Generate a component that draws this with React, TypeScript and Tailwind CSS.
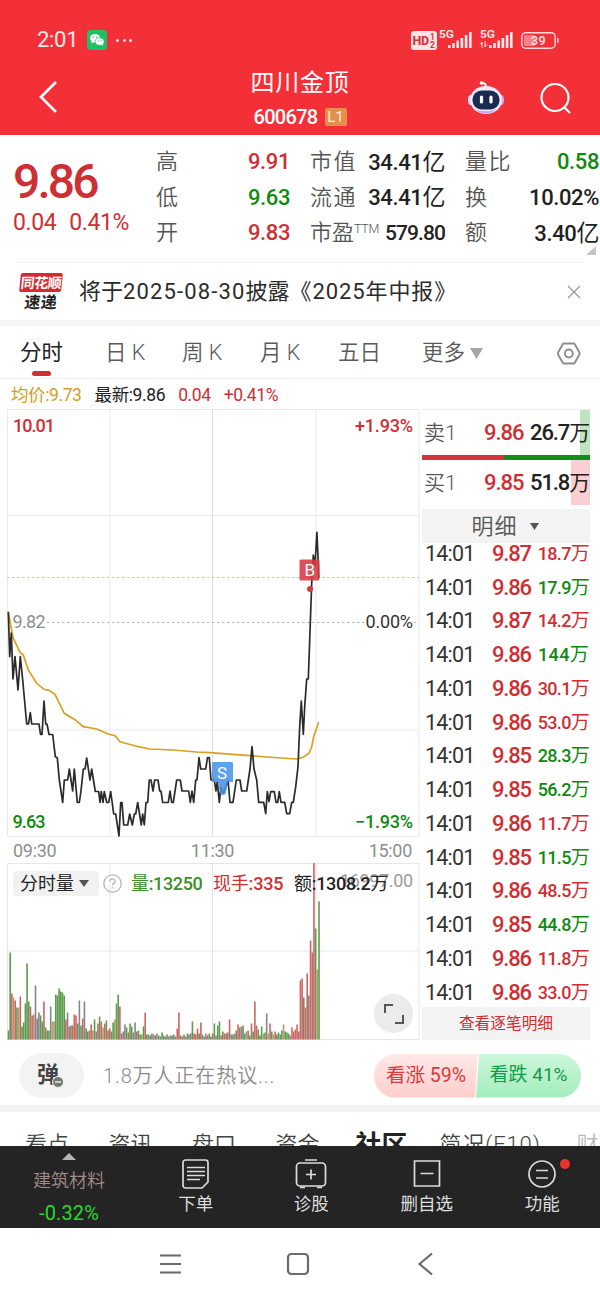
import type { ReactNode } from 'react';
import clsx from 'clsx';

const RED = 'text-[#cf2e33]';
const GREEN = 'text-[#0f8a0f]';

const PRICE_LINE =
  '8.3,611.7 9.7,656.7 11.3,633 13,679 15,656.7 18,690 20.3,656.7 22.7,680 26.7,724 28.5,724 30.3,712.7 31.7,724 39,724 40.5,734.5 42,734.5 44,701 45.7,724 47,724 49,734.5 52.7,734.5 55.3,756.7 57.3,757.7 59.3,780 62.7,802.5 64.3,780 67.7,780 69.3,769 72.7,791 74.3,769 77.3,802.5 79.3,802.5 81,791 83.3,769 85,769 86.7,758 90,780 91.7,769 95.3,791.5 98.7,791.5 100,802.5 101.3,791.5 103,802.5 104.3,791.5 106.7,802.5 108.7,802.5 110.7,791.5 113.7,814 115.7,814 119,836 120.7,802.5 122,802.5 123.7,825 127.7,825 129.7,814 132.3,825 134.3,814 135.7,814 137.7,802.5 141.3,825 142.7,814 144.3,825 146,802.5 147.7,802.5 149.3,780 151,780 153,791 154.7,780 158,780 159.7,791 161,791 162.7,802.5 168.3,802.5 170,791 171.7,802.5 173.3,802.5 176.7,780 180.3,780 182,791 188.7,791 190.3,802.5 192,791 193.7,802.5 195.7,780 197,780 199,757.7 200.7,769 205.7,769 207.5,757.7 209.3,757.7 211,780 214.3,780 216,791 217.3,781.7 219.3,802.3 221,787 222.7,793 225,789 228,780 230,802.3 233,802.3 236.3,780 240,780 241.7,791 246.7,791 250,769 252,746.7 254,769 256.7,780 258.7,802.3 263.7,802.3 265.7,813.7 267.3,791.7 269,801.7 270.7,791.7 274.3,791.7 276,802.3 277.7,802.3 279.3,791.7 281,802.3 284.7,802.3 286.7,813.7 289.7,813.7 291.7,802.3 293.3,802.3 295.7,786.7 298,766.7 299.7,726.7 301.3,701 303.3,734.3 304.7,706.7 306.7,679 308.3,679 309.7,640 311.7,583.3 313.3,555 315,566 316.9,532.3 318.3,563 318.6,578';

const AVG_LINE =
  '8.3,612 13,637.7 20,652.3 23.3,655 28.3,670 36.7,683.3 44,689.3 49,690.3 55,694.3 64.3,713.3 75,719.7 83.3,726.7 96.7,729 108.3,734 115,735.7 120,741.7 138.3,746.7 150,749 173.3,750 196.7,752 210,752.6 233,754.3 266.7,757 296.7,759 303.3,757.3 309,753.3 311.7,746.7 313.7,736.7 318.7,722.3';

// one bar per minute: height + direction (r up, g down, k flat, t mixed)
const VOLUMES =
  '9g 87g 46r 42t 39r 32g 32t 43r 13g 17g 36g 76g 38g 33r 24r 25t 54k 21k 27k 24g 18g 38r 12g 9g 9g 33k 18t 18t 45g 44g 51g 48g 47g 44g 20r 27k 13r 14g 14r 25r 24r 16g 39k 14g 21r 38k 11g 8g 9r 15r 9t 20g 8k 16r 23g 18r 12t 16r 19g 9r 11r 8g 17g 20t 36g 45g 33r 6r 8k 15k 12g 7r 16g 13g 7k 17k 8r 9g 5g 5t 13g 27r 5g 5k 4g 6k 5r 4g 6k 4k 3g 7g 4k 3g 5k 3r 4g 4k 5g 3k 11r 27r 4g 3k 5r 3g 6k 5g 6k 18g 6r 5r 11r 6g 17r 5k 3g 6k 4r 6g 3k 6r 16g 4k 14g 18g 4r 8g 6r 6r 7g 20r 5k 5g 6k 9g 15r 12r 13k 14g 6g 8t 9k 4g 16r 8g 38r 14r 10g 4g 13g 6t 7g 26k 6t 16r 8g 5t 8r 5g 7g 5k 9g 15t 8g 7g 6g 4k 12r 8r 10r 15r 8r 59r 61r 42g 32r 66r 44k 99r 87r 177r 111g 70t 138g'
    .split(' ')
    .map((v) => ({ h: parseInt(v, 10), dir: v.slice(-1) }));

const BAR_COLORS: Record<string, string> = {
  r: '#cf6464',
  g: '#5b9c4d',
  k: '#85858b',
  t: '#b79a6c',
};

const TRADES = [
  ['9.87', '18.7', 'r'],
  ['9.86', '17.9', 'g'],
  ['9.87', '14.2', 'r'],
  ['9.86', '144', 'g'],
  ['9.86', '30.1', 'r'],
  ['9.86', '53.0', 'r'],
  ['9.85', '28.3', 'g'],
  ['9.85', '56.2', 'g'],
  ['9.86', '11.7', 'r'],
  ['9.85', '11.5', 'g'],
  ['9.86', '48.5', 'r'],
  ['9.85', '44.8', 'g'],
  ['9.86', '11.8', 'r'],
  ['9.86', '33.0', 'r'],
];

const Signal = ({ data }: { data?: boolean }) => (
  <svg className="overflow-visible" width="34" height="20" viewBox="0 0 34 20" fill="#ffe9ea">
    <text x="0" y="8" fontSize="11.5" fontWeight="600" textLength="15" lengthAdjust="spacingAndGlyphs">
      5G
    </text>
    {[3, 5, 7.5, 10, 13, 16].map((h, i) => (
      <rect key={h} x={9 + i * 4.2} y={18 - h} width="2.6" height={h} rx="0.6" />
    ))}
    {data && <path d="M0 14.5l2-2.5v6M7 14.5l-2 2.5v-6" stroke="#ffe9ea" strokeWidth="1" fill="none" />}
  </svg>
);

const StatusBar = () => (
  <div className="flex h-[60px] items-center pt-5 pl-[37px]">
    <span className="w-[50px] text-[22px] leading-none tracking-[-0.3px] text-[#ffe9ea]">2:01</span>
    <svg width="20" height="20" viewBox="0 0 20 20">
      <rect width="20" height="20" rx="4" fill="#1fc066" />
      <ellipse cx="8" cy="8.3" rx="5" ry="4.2" fill="#fff" />
      <path d="M5 11l-.8 2.4 3-1.4z" fill="#fff" />
      <ellipse cx="12.7" cy="11.6" rx="4.4" ry="3.7" fill="#fff" stroke="#1fc066" strokeWidth="0.6" />
      <path d="M14 14.6l2 1.2-.2-2.2z" fill="#fff" />
      <g fill="#1fc066">
        <circle cx="6.3" cy="7.2" r="0.7" />
        <circle cx="9.6" cy="7.2" r="0.7" />
        <circle cx="11.3" cy="10.8" r="0.6" />
        <circle cx="14.1" cy="10.8" r="0.6" />
      </g>
    </svg>
    <div className="ml-[9px] flex gap-[3.5px]">
      <i className="size-[3px] rounded-full bg-[#ffe0e1]" />
      <i className="size-[3px] rounded-full bg-[#ffe0e1]" />
      <i className="size-[3px] rounded-full bg-[#ffe0e1]" />
    </div>
    <svg className="ml-[279px]" width="26" height="19" viewBox="0 0 26 19" fill="#d8303a">
      <rect width="26" height="19" rx="3" fill="#ffe4e6" />
      <text x="1.5" y="14" fontSize="12.5" fontWeight="800" textLength="16.5">
        HD
      </text>
      <text x="19" y="9" fontSize="8.5" fontWeight="700">
        1
      </text>
      <text x="19" y="17" fontSize="8.5" fontWeight="700">
        2
      </text>
    </svg>
    <div className="ml-[2px] flex gap-[7px]">
      <Signal />
      <Signal data />
    </div>
    <svg className="ml-[7px]" width="40" height="17" viewBox="0 0 40 17">
      <rect x="3" y="3" width="11" height="11" rx="1" fill="#f98286" />
      <rect x="0.8" y="0.8" width="33.4" height="15.4" rx="4" fill="none" stroke="#ffd9da" strokeWidth="1.5" />
      <path d="M36 6.2h1.6v4.6H36z" fill="#ffd9da" />
      <text x="10" y="13" fontSize="12.5" fontWeight="500" fill="#ffe9ea" textLength="14.5">
        39
      </text>
    </svg>
  </div>
);

const Robot = () => (
  <svg width="38" height="36" viewBox="0 0 38 36" fill="none">
    <path d="M19 7c0-3-1-4-4-4" stroke="#fff" strokeWidth="2" />
    <circle cx="14.5" cy="3" r="1.8" fill="#fff" />
    <ellipse cx="3.8" cy="20" rx="2.8" ry="5" fill="#e7dcf6" />
    <ellipse cx="34.2" cy="20" rx="2.8" ry="5" fill="#cfa9ee" />
    <ellipse cx="19" cy="20" rx="16" ry="14" fill="#eee9fb" />
    <path d="M8 29c6 6 16 6 22 0-5 3-17 3-22 0z" fill="#c9a6ec" />
    <rect x="5.5" y="10.5" width="27" height="19" rx="9" fill="#1b2b50" />
    <path d="M14.5 17v5M24 17v5" stroke="#fff" strokeWidth="3.2" strokeLinecap="round" />
  </svg>
);

const Header = () => (
  <header className="h-[135px] bg-[#f33038] text-white">
    <StatusBar />
    <div className="flex h-[75px] items-center">
      <svg className="mt-[-1px] ml-[38px]" width="20" height="34" viewBox="0 0 20 34">
        <path d="M18 2L3 17l15 15" fill="none" stroke="#fff" strokeWidth="2.6" />
      </svg>
      <div className="ml-[180px] w-[124px] text-center">
        <div className="text-[24px] leading-[32px] tracking-[0.8px] whitespace-nowrap">四川金顶</div>
        <div className="mt-[7px] flex items-center justify-center gap-[7px]">
          <span className="text-[20px] leading-[22px] font-medium tracking-[-0.7px]">600678</span>
          <span className="flex h-[18px] w-[22px] items-center justify-center rounded-xs bg-[#e5904a] text-[15px] leading-[18px] text-[#ffeedd]">
            L1
          </span>
        </div>
      </div>
      <div className="ml-[105px]">
        <Robot />
      </div>
      <svg className="ml-[35px]" width="32" height="32" viewBox="0 0 32 32" fill="none" stroke="#fff" strokeWidth="2.2">
        <circle cx="15" cy="15.5" r="13.5" />
        <path d="M24.5 25.5l5.5 5.5" />
      </svg>
    </div>
  </header>
);

type StatProps = { label: ReactNode; value: string; unit?: string; color?: string; tight?: boolean };

const Stat = ({ label, value, unit, color = 'text-[#222]', tight }: StatProps) => (
  <div className="flex h-[35.5px] items-center justify-between whitespace-nowrap">
    <span className="text-[22px] font-[350] text-[#555]">{label}</span>
    <span className={clsx('font-medium', color, tight ? 'text-[21px] tracking-[-0.9px]' : 'text-[22px] tracking-[-0.4px]')}>
      {value}
      {unit && <span className="text-[23px] font-normal">{unit}</span>}
    </span>
  </div>
);

const Quote = () => (
  <section className="flex h-[127px] pt-[9.5px] leading-none">
    <div className="w-[143px] pl-[13px]">
      <div className={clsx('mt-[12px] text-[48px] leading-[50px] font-medium tracking-[-2.9px]', RED)}>9.86</div>
      <div className={clsx('mt-[4px] flex gap-[13px] text-[23px] leading-[24px] tracking-[-0.4px]', RED)}>
        <span>0.04</span>
        <span>0.41%</span>
      </div>
    </div>
    <div className="ml-[13px] w-[134px]">
      <Stat label="高" value="9.91" color={RED} />
      <Stat label="低" value="9.63" color={GREEN} />
      <Stat label="开" value="9.83" color={RED} />
    </div>
    <div className="ml-[20px] w-[135px]">
      <Stat label={<span className="tracking-[1.5px]">市值</span>} value="34.41" unit="亿" />
      <Stat label={<span className="tracking-[1.5px]">流通</span>} value="34.41" unit="亿" />
      <Stat
        label={
          <>
            市盈<sup className="top-[-0.6em] text-[12.5px] tracking-[-0.3px]">TTM</sup>
          </>
        }
        value="579.80"
        tight
      />
    </div>
    <div className="relative ml-[20px] w-[134px]">
      <Stat label={<span className="tracking-[1.5px]">量比</span>} value="0.58" color={GREEN} />
      <Stat label="换" value="10.02%" />
      <Stat label="额" value="3.40" unit="亿" />
      <svg className="absolute right-[3px] bottom-[7px]" width="10" height="9">
        <path d="M10 0v9H0z" fill="#c4c4c4" />
      </svg>
    </div>
  </section>
);

const Notice = () => (
  <section className="mr-[17px] ml-[18px] flex h-[58px] items-center border-t border-[#f0f0f0]">
    <div className="w-[46px] leading-none font-bold">
      <div className="ml-[2px] flex h-[19px] w-[42px] -skew-x-6 items-center justify-center rounded-xs bg-[#d8292f] text-[14px] tracking-[-0.5px] text-white">
        同花顺
      </div>
      <div className="-skew-x-6 pt-[3px] text-center text-[16px] tracking-[0.5px] text-[#222]">速递</div>
    </div>
    <div className="ml-[15px] flex-1 text-[22px] whitespace-nowrap text-[#2b2b2b]">
      将于<span className="tracking-[1.15px]">2025-08-30</span>披露
      <span className="tracking-[0.9px]">《2025年中报》</span>
    </div>
    <svg className="mr-[2px]" width="14" height="14" viewBox="0 0 14 14">
      <path d="M1 1l12 12M13 1L1 13" stroke="#9a9a9a" strokeWidth="1.4" />
    </svg>
  </section>
);

const PeriodTabs = () => (
  <nav className="flex h-[53px] items-center border-b border-[#f0f0f0] pt-[3px] pl-[20px] text-[21.5px] font-[350] text-[#5a5a5a]">
    <div className="relative w-[85px] font-normal text-[#222]">
      分时
      <i className="absolute top-[34px] left-[12px] h-[5px] w-[19px] rounded-full bg-[#cf2e33]" />
    </div>
    <div className="w-[77px]">日 K</div>
    <div className="w-[78px]">周 K</div>
    <div className="w-[78px]">月 K</div>
    <div className="w-[84px]">五日</div>
    <div className="flex w-[134px] items-center gap-[5px]">
      更多
      <svg width="13" height="11">
        <path d="M0 0h13L6.5 11z" fill="#a5a5a5" />
      </svg>
    </div>
    <svg width="26" height="26" viewBox="0 0 26 26" fill="none" stroke="#8c8c8c" strokeWidth="1.9">
      <path d="M8 2.5h9.5a1.5 1.5 0 0 1 1.3.8l4.6 8.2a2 2 0 0 1 0 2l-4.6 8.2a1.5 1.5 0 0 1-1.3.8H8a1.5 1.5 0 0 1-1.3-.8L2.1 13.500a2 2 0 0 1 0-2l4.600-8.200a1.500 1.500 0 0 1 1.300-.8z" />
      <circle cx="12.8" cy="12.5" r="4" />
    </svg>
  </nav>
);

const PriceChart = () => (
  <svg className="block" width="413" height="428" viewBox="7 409 413 428" fontSize="18" fontWeight="500">
    <g stroke="#e9e9e9" fill="none">
      <path d="M7.5 409.5H419V836.5H7.5zM7 515.5H419M7 730H419M110 409V836M316 409V836" />
      <path d="M212.5 409V836" stroke="#dedede" />
    </g>
    <path d="M7 577.5H419" stroke="#cdc6b0" strokeDasharray="2.5 2.5" />
    <path d="M47 622.5H364M414 622.5H419" stroke="#bbb8b0" strokeDasharray="2.5 2.5" />
    <polyline points={AVG_LINE} fill="none" stroke="#d9a021" strokeWidth="1.7" />
    <polyline points={PRICE_LINE} fill="none" stroke="#2a2a2a" strokeWidth="1.7" strokeLinejoin="round" />
    <g fill="#d93a40">
      <rect x="299.5" y="559.5" width="20" height="21" rx="1.5" fillOpacity="0.88" />
      <circle cx="310" cy="589" r="3" />
      <text x="304.5" y="576" fontSize="17" fontWeight="400" fill="#fff">
        B
      </text>
    </g>
    <path
      d="M213.5 762h18a1.5 1.5 0 0 1 1.5 1.5v18.5h-5l-2 10a3 3 0 0 1-6 0l-2-10h-6v-18.5a1.5 1.5 0 0 1 1.5-1.5z"
      fill="#4a94e8"
      fillOpacity="0.88"
    />
    <text x="217" y="779" fontSize="17" fontWeight="400" fill="#fff">
      S
    </text>
    <text x="13" y="431.5" fill="#cf2e33" textLength="42">
      10.01
    </text>
    <text x="355" y="431.5" fill="#cf2e33" textLength="58">
      +1.93%
    </text>
    <text x="12.5" y="627.5" fill="#8e8e8e" fontWeight="400" textLength="33">
      9.82
    </text>
    <text x="365.5" y="627.5" fill="#333" fontWeight="400" textLength="47.5">
      0.00%
    </text>
    <text x="12.5" y="827.5" fill="#0f8a0f" textLength="33">
      9.63
    </text>
    <text x="355" y="827.5" fill="#0f8a0f" textLength="58">
      −1.93%
    </text>
  </svg>
);

const VolumeChart = () => (
  <div className="relative">
    <svg className="block" width="413" height="177" viewBox="7 863.5 413 177">
      <path d="M7.5 864H419V1040H7.5zM7 951.5H419M110 864V1040M316 864V1040M212.5 864V1040" stroke="#e6e6e6" fill="none" />
      {VOLUMES.map(({ h, dir }, i) => (
        <rect
          key={i}
          x={7.7 + (i * 310.5) / (VOLUMES.length - 1)}
          y={1040 - h}
          width="1.6"
          height={h}
          fill={BAR_COLORS[dir]}
        />
      ))}
      <text x="340" y="887" fontSize="18" fill="#9b9b9b" textLength="73">
        16997.00
      </text>
    </svg>
    <div className="absolute top-[8px] left-[6px] flex items-center text-[18px] leading-[25px] whitespace-nowrap">
      <span className="flex w-[86px] items-center gap-[5px] rounded-sm bg-[#f1f1f1] pl-[7px] text-[#222]">
        分时量
        <svg width="10" height="7">
          <path d="M0 0h10L5 7z" fill="#555" />
        </svg>
      </span>
      <svg className="ml-[4px]" width="19" height="19" viewBox="0 0 19 19" fill="none" stroke="#b5b5b5" strokeWidth="1.3">
        <circle cx="9.5" cy="9.5" r="8.7" />
        <path d="M7 7.5a2.5 2.5 0 1 1 3.6 2.2c-.8.4-1.1.8-1.1 1.6M9.5 13v1.5" />
      </svg>
      <span className="ml-[9px] w-[82px] font-medium tracking-[-0.35px] text-[#3b8f27]">
        <span className="font-normal">量</span>:13250
      </span>
      <span className={clsx('w-[81px] font-medium tracking-[-0.2px]', RED)}>
        <span className="font-normal">现手</span>:335
      </span>
      <span className="font-medium tracking-[-0.3px] text-[#222]">
        <span className="font-normal">额</span>:1308.2<span className="font-normal">万</span>
      </span>
    </div>
    <div className="absolute right-[7px] bottom-[7px] flex size-[39px] items-center justify-center rounded-full bg-[#ebebeb]">
      <svg width="22" height="22" viewBox="0 0 22 22" fill="none" stroke="#555" strokeWidth="2">
        <path d="M2 10V2h8M20 12v8h-8" />
      </svg>
    </div>
  </div>
);

const BookRow = ({ side, price, volume, bar }: { side: string; price: string; volume: string; bar: string }) => (
  <div className="relative flex h-[45px] items-center pt-px text-[22px] leading-none whitespace-nowrap">
    <i className={clsx('absolute top-0 right-0 h-full', bar)} />
    <span className="relative w-[62px] pl-[2px] text-[21px] font-[350] text-[#555]">{side}</span>
    <span className={clsx('relative w-[46px] font-medium tracking-[-1px]', RED)}>{price}</span>
    <span className="relative font-medium tracking-[-1.1px] text-[#222]">
      {volume}
      <span className="text-[21px] font-normal">万</span>
    </span>
  </div>
);

const OrderPanel = () => (
  <aside className="ml-[2px] flex h-[631px] w-[169px] flex-col border-t border-[#eee] pr-px">
    <BookRow side="卖1" price="9.86" volume="26.7" bar="w-[10px] bg-[#bfe5c0]" />
    <div className="flex h-[5px] shrink-0">
      <i className="w-[82px] bg-[#d8333a]" />
      <i className="flex-1 bg-[#108f18]" />
    </div>
    <BookRow side="买1" price="9.85" volume="51.8" bar="w-[19px] bg-[#fbcfd1]" />
    <div className="mt-[4px] flex h-[34px] items-center justify-center gap-[12px] bg-[#f3f3f3] pr-[2px] text-[22px] font-[350] text-[#555]">
      <span className="tracking-[1px]">明细</span>
      <svg width="9" height="7">
        <path d="M0 0h9L4.5 7z" fill="#555" />
      </svg>
    </div>
    <div className="h-[464px] overflow-hidden">
      <div className="-mt-[6px]">
        {TRADES.map(([price, amount, dir], i) => (
          <div key={i} className="flex h-[33.75px] items-center leading-[30px] font-medium whitespace-nowrap">
            <span className="w-[70px] pl-[3px] text-[21.5px] font-normal tracking-[-0.8px] text-[#333]">14:01</span>
            <span className={clsx('text-[22px] tracking-[-1.2px]', RED)}>{price}</span>
            <span
              className={clsx(
                'flex-1 pr-px text-right text-[18px]',
                amount.length > 3 ? 'tracking-[-0.7px]' : 'tracking-[0.3px]',
                dir === 'r' ? RED : GREEN,
              )}
            >
              {amount}
              <span className="text-[19px] font-normal">万</span>
            </span>
          </div>
        ))}
      </div>
    </div>
    <div className={clsx('flex h-[33px] items-center justify-center bg-[#f3f3f3] text-[15.7px]', RED)}>查看逐笔明细</div>
  </aside>
);

const CommentBar = () => (
  <section className="flex h-[65px] items-center pt-[6px] pl-[19px]">
    <div className="relative flex h-[45px] w-[65px] items-center justify-center rounded-full bg-[#f3f3f3] pr-[7px] pb-[2px] text-[22px] font-bold text-[#444]">
      弹
      <svg className="absolute top-[23px] left-[33px]" width="12" height="12">
        <circle cx="6" cy="6" r="5.5" fill="#777" stroke="#f3f3f3" />
        <path d="M3 6h6" stroke="#fff" strokeWidth="1.3" />
      </svg>
    </div>
    <span className="ml-[19px] w-[271px] text-[20px] font-[350] tracking-[0.9px] text-[#8c8c8c]">1.8万人正在热议...</span>
    <div className="flex h-[44px] w-[104px] items-center justify-center rounded-l-full bg-linear-to-b from-[#ffe9e8] to-[#ffcdcb] text-[19.5px] text-[#d8393c] [clip-path:polygon(0_0,100%_0,97%_100%,0_100%)]">
      看涨 59%
    </div>
    <div className="-ml-[2px] flex h-[44px] w-[105px] items-center justify-center rounded-r-full bg-linear-to-b from-[#ccf6da] to-[#a3edbd] text-[19px] text-[#149a45] [clip-path:polygon(3%_0,100%_0,100%_100%,0_100%)]">
      看跌 41%
    </div>
  </section>
);

const InfoTabs = () => (
  <nav className="flex h-[34px] overflow-hidden pt-[17px] pl-[25px] text-[22px] leading-[32px] font-[350] whitespace-nowrap text-[#444]">
    <span className="w-[83.5px] shrink-0">看点</span>
    <span className="w-[83.5px] shrink-0">资讯</span>
    <span className="w-[83.5px] shrink-0">盘口</span>
    <span className="w-[80px] shrink-0">资金</span>
    <span className="w-[84px] shrink-0 text-[26px] font-bold text-[#222]">社区</span>
    <span className="w-[137px] shrink-0 tracking-[0.9px]">简况(F10)</span>
    <span className="shrink-0 text-[#bbb]">财务</span>
  </nav>
);

const NavItem = ({ label, badge, children }: { label: string; badge?: boolean; children: ReactNode }) => (
  <div className="relative flex w-[115.5px] flex-col items-center pt-[12px] text-[17.5px] leading-none text-[#dedede]">
    <svg width="32" height="32" viewBox="0 0 32 32" fill="none" stroke="#dcdcdc" strokeWidth="1.7">
      {children}
    </svg>
    <span className="mt-[6px]">{label}</span>
    {badge && <i className="absolute top-[13px] left-[75px] size-[10px] rounded-full bg-[#e8332f]" />}
  </div>
);

const BottomNav = () => (
  <nav className="flex h-[82px] bg-[#242424]">
    <div className="flex w-[138px] flex-col items-center pt-[7px] leading-none">
      <svg width="14" height="7">
        <path d="M7 0l7 7H0z" fill="#b5b5b5" />
      </svg>
      <span className="mt-[12px] text-[18px] font-[350] text-[#a58c8c]">建筑材料</span>
      <span className="mt-[13px] text-[20px] tracking-[0.1px] text-[#25da2d]">-0.32%</span>
    </div>
    <NavItem label="下单">
      <path d="M5.5 2h20a2.5 2.5 0 0 1 2.5 2.5V24l-6 6H5.5A2.5 2.5 0 0 1 3 27.5v-23A2.5 2.5 0 0 1 5.5 2z" />
      <path d="M7 9.5h18M7 13.5h18M7 17.5h18M7 21.5h13" />
    </NavItem>
    <NavItem label="诊股">
      <rect x="1.5" y="5" width="29" height="23" rx="3.5" />
      <path d="M10 2h12M16 11.5v10M11 16.5h10M5 29.5h5M22 29.5h5" />
    </NavItem>
    <NavItem label="删自选">
      <path d="M3.5 3h25v25h-25zM9.5 15.5h13" />
    </NavItem>
    <NavItem label="功能" badge>
      <circle cx="16" cy="16" r="13" />
      <path d="M10 12.5h12M10 20h12" />
    </NavItem>
  </nav>
);

const SystemNav = () => (
  <footer className="flex h-[72px] items-center pl-[160px]">
    <svg width="273" height="26" viewBox="0 0 273 26" fill="none" stroke="#6b6b6b" strokeWidth="2.2">
      <path d="M0 4.5h21M0 13h21M0 21.5h21" />
      <rect x="128" y="3" width="20" height="20" rx="3.5" />
      <path d="M272 2.5L259.5 13 272 23.5" />
    </svg>
  </footer>
);

export default function App() {
  return (
    <div className="h-[1300px] w-[600px] overflow-hidden bg-white font-[Roboto,'Noto_Sans_CJK_SC',sans-serif]">
      <Header />
      <Quote />
      <Notice />
      <div className="h-[6px] bg-[#f4f4f4]" />
      <PeriodTabs />
      <div className="flex h-[30px] items-center gap-[13px] pt-[3px] pl-[11px] text-[17.5px] tracking-[-0.4px] whitespace-nowrap">
        <span className="text-[#d2a021]">均价:9.73</span>
        <span className="text-[#222]">最新:9.86</span>
        <span className={RED}>0.04</span>
        <span className={RED}>+0.41%</span>
      </div>
      <main className="flex h-[631px] pl-[7px]">
        <div className="w-[413px]">
          <PriceChart />
          <div className="flex h-[26px] items-center justify-between pt-px pr-[8px] pl-[6px] text-[18px] tracking-[-0.3px] text-[#8e8e8e]">
            <span>09:30</span>
            <span>11:30</span>
            <span>15:00</span>
          </div>
          <VolumeChart />
        </div>
        <OrderPanel />
      </main>
      <CommentBar />
      <div className="h-[7px] bg-[#f3f3f3]" />
      <InfoTabs />
      <BottomNav />
      <SystemNav />
    </div>
  );
}
